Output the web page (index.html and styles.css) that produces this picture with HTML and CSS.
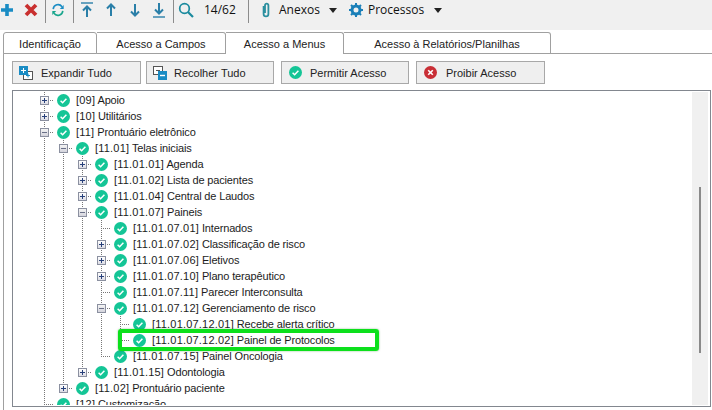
FILE: index.html
```html
<!DOCTYPE html>
<html lang="pt-BR">
<head>
<meta charset="utf-8">
<title>Acesso a Menus</title>
<link rel="stylesheet" href="styles.css">
</head>
<body>
<svg class="defs" width="0" height="0" aria-hidden="true">
  <symbol id="ok" viewBox="0 0 13 13">
    <circle cx="6.5" cy="6.5" r="6.5" fill="#14c596"/>
    <path d="M3.6 6.8 5.6 8.7 9.4 4.7" fill="none" stroke="#fff" stroke-width="1.5"/>
  </symbol>
</svg>

<header class="toolbar">
  <span class="tool first"><svg width="14" height="14" viewBox="0 0 14 14"><path d="M7 1v12M1 7h12" stroke="#1a8cc4" stroke-width="3.6"/></svg></span>
  <span class="tool"><svg width="14" height="14" viewBox="0 0 14 14"><path d="M2 2l10 10M12 2 2 12" stroke="#c9302f" stroke-width="3.8"/></svg></span>
  <span class="sep s2"></span>
  <span class="tool"><svg width="14" height="14" viewBox="0 0 16 16"><path d="M2.5 7A5.6 5.6 0 0 1 12.6 4.2" fill="none" stroke="#1a8cc4" stroke-width="1.8"/><path d="M14.5 2.2v4.6H10z" fill="#1a8cc4"/><path d="M13.5 9A5.6 5.6 0 0 1 3.4 11.8" fill="none" stroke="#17a58c" stroke-width="1.8"/><path d="M1.5 13.8V9.2H6z" fill="#17a58c"/></svg></span>
  <span class="sep s3"></span>
  <span class="tool m1"><svg width="14" height="16" viewBox="0 0 14 16"><path d="M1 1h12" stroke="#2a7fa8" stroke-width="1.4"/><path d="M7 15V5M3 8.5 7 4.5l4 4" fill="none" stroke="#2a7fa8" stroke-width="2"/></svg></span>
  <span class="tool"><svg width="14" height="16" viewBox="0 0 14 16"><path d="M7 14V3M3 6.5 7 2.5l4 4" fill="none" stroke="#2a7fa8" stroke-width="2"/></svg></span>
  <span class="tool"><svg width="14" height="16" viewBox="0 0 14 16"><path d="M7 2v11M3 9.5l4 4 4-4" fill="none" stroke="#2a7fa8" stroke-width="2"/></svg></span>
  <span class="tool"><svg width="14" height="16" viewBox="0 0 14 16"><path d="M1 15h12" stroke="#2a7fa8" stroke-width="1.4"/><path d="M7 1v10M3 7.5l4 4 4-4" fill="none" stroke="#2a7fa8" stroke-width="2"/></svg></span>
  <span class="sep s2"></span>
  <span class="tool"><svg width="16" height="16" viewBox="0 0 16 16"><circle cx="6.5" cy="6.5" r="4.8" fill="none" stroke="#1b8a9e" stroke-width="1.7"/><path d="M10 10l5 5" stroke="#1b8a9e" stroke-width="2.2"/></svg></span>
  <span class="count">14/62</span>
  <span class="sep s12"></span>
  <span class="menu anexos">
    <svg width="10" height="16" viewBox="0 0 10 16"><path d="M2.6 4v8a2.4 2.4 0 0 0 4.8 0V3.4a1.7 1.7 0 0 0-3.4 0V11" fill="none" stroke="#2b8f9f" stroke-width="1.8"/></svg>
    <span class="menu-label">Anexos</span><span class="caret"></span>
  </span>
  <span class="menu procs">
    <svg width="14" height="14" viewBox="0 0 14 14"><circle cx="7" cy="7" r="4" fill="none" stroke="#1a7fb8" stroke-width="3"/><path d="M7 0v3M7 11v3M0 7h3M11 7h3M2 2l2 2M10 10l2 2M12 2l-2 2M4 10l-2 2" stroke="#1a7fb8" stroke-width="2"/></svg>
    <span class="menu-label">Processos</span><span class="caret wide"></span>
  </span>
</header>

<nav class="tabs">
  <span class="tab t1">Identificação</span>
  <span class="tab t2">Acesso a Campos</span>
  <span class="tab t3 active">Acesso a Menus</span>
  <span class="tab t4">Acesso à Relatórios/Planilhas</span>
</nav>

<main class="pane">
  <div class="actions">
    <button class="btn b1">
      <svg width="14" height="14" viewBox="0 0 14 14"><rect x="4.5" y="5.5" width="9" height="8" fill="#fff" stroke="#555"/><path d="M7 9.5h4M9 7.5v4" stroke="#1a8cc4"/><rect x="0" y="0" width="9" height="9" fill="#1a8cc4"/><path d="M2 4.5h5M4.5 2v5" stroke="#fff"/></svg>
      <span>Expandir Tudo</span>
    </button>
    <button class="btn b2">
      <svg width="14" height="14" viewBox="0 0 14 14"><rect x=".5" y=".5" width="9" height="8" fill="#fff" stroke="#555"/><path d="M3 4.5h4" stroke="#555"/><rect x="5" y="5" width="9" height="9" fill="#1a8cc4"/><path d="M7 9.5h5" stroke="#fff" stroke-width="1.4"/></svg>
      <span>Recolher Tudo</span>
    </button>
    <button class="btn b3">
      <svg class="i13" width="13" height="13"><use href="#ok"/></svg>
      <span>Permitir Acesso</span>
    </button>
    <button class="btn b4">
      <svg width="13" height="13" viewBox="0 0 13 13"><circle cx="6.5" cy="6.5" r="6.5" fill="#c92f36"/><path d="M4.2 4.2l4.6 4.6M8.8 4.2 4.2 8.8" stroke="#fff" stroke-width="1.6"/></svg>
      <span>Proibir Acesso</span>
    </button>
  </div>

  <section class="tree">
    <div class="list">
      <div class="row"><i class="c tee"><b class="exp plus"></b></i><i class="ic"><svg width="13" height="13"><use href="#ok"/></svg></i><span><em>[09]</em> Apoio</span></div>
      <div class="row"><i class="c tee"><b class="exp plus"></b></i><i class="ic"><svg width="13" height="13"><use href="#ok"/></svg></i><span><em>[10]</em> Utilitários</span></div>
      <div class="row"><i class="c tee"><b class="exp minus"></b></i><i class="ic"><svg width="13" height="13"><use href="#ok"/></svg></i><span><em>[11]</em> Prontuário eletrônico</span></div>
      <div class="row"><i class="c v"></i><i class="c tee"><b class="exp minus"></b></i><i class="ic"><svg width="13" height="13"><use href="#ok"/></svg></i><span><em>[11.01]</em> Telas iniciais</span></div>
      <div class="row"><i class="c v"></i><i class="c v"></i><i class="c tee"><b class="exp plus"></b></i><i class="ic"><svg width="13" height="13"><use href="#ok"/></svg></i><span><em>[11.01.01]</em> Agenda</span></div>
      <div class="row"><i class="c v"></i><i class="c v"></i><i class="c tee"><b class="exp plus"></b></i><i class="ic"><svg width="13" height="13"><use href="#ok"/></svg></i><span><em>[11.01.02]</em> Lista de pacientes</span></div>
      <div class="row"><i class="c v"></i><i class="c v"></i><i class="c tee"><b class="exp plus"></b></i><i class="ic"><svg width="13" height="13"><use href="#ok"/></svg></i><span><em>[11.01.04]</em> Central de Laudos</span></div>
      <div class="row"><i class="c v"></i><i class="c v"></i><i class="c tee"><b class="exp minus"></b></i><i class="ic"><svg width="13" height="13"><use href="#ok"/></svg></i><span><em>[11.01.07]</em> Paineis</span></div>
      <div class="row"><i class="c v"></i><i class="c v"></i><i class="c v"></i><i class="c tee"></i><i class="ic"><svg width="13" height="13"><use href="#ok"/></svg></i><span><em>[11.01.07.01]</em> Internados</span></div>
      <div class="row"><i class="c v"></i><i class="c v"></i><i class="c v"></i><i class="c tee"><b class="exp plus"></b></i><i class="ic"><svg width="13" height="13"><use href="#ok"/></svg></i><span><em>[11.01.07.02]</em> Classificação de risco</span></div>
      <div class="row"><i class="c v"></i><i class="c v"></i><i class="c v"></i><i class="c tee"><b class="exp plus"></b></i><i class="ic"><svg width="13" height="13"><use href="#ok"/></svg></i><span><em>[11.01.07.06]</em> Eletivos</span></div>
      <div class="row"><i class="c v"></i><i class="c v"></i><i class="c v"></i><i class="c tee"><b class="exp plus"></b></i><i class="ic"><svg width="13" height="13"><use href="#ok"/></svg></i><span><em>[11.01.07.10]</em> Plano terapêutico</span></div>
      <div class="row"><i class="c v"></i><i class="c v"></i><i class="c v"></i><i class="c tee"></i><i class="ic"><svg width="13" height="13"><use href="#ok"/></svg></i><span><em>[11.01.07.11]</em> Parecer Interconsulta</span></div>
      <div class="row"><i class="c v"></i><i class="c v"></i><i class="c v"></i><i class="c tee"><b class="exp minus"></b></i><i class="ic"><svg width="13" height="13"><use href="#ok"/></svg></i><span><em>[11.01.07.12]</em> Gerenciamento de risco</span></div>
      <div class="row"><i class="c v"></i><i class="c v"></i><i class="c v"></i><i class="c v"></i><i class="c tee"></i><i class="ic"><svg width="13" height="13"><use href="#ok"/></svg></i><span><em>[11.01.07.12.01]</em> Recebe alerta crítico</span></div>
      <div class="row"><i class="c v"></i><i class="c v"></i><i class="c v"></i><i class="c v"></i><i class="c end"></i><i class="ic"><svg width="13" height="13"><use href="#ok"/></svg></i><span><em>[11.01.07.12.02]</em> Painel de Protocolos</span></div>
      <div class="row"><i class="c v"></i><i class="c v"></i><i class="c v"></i><i class="c end"></i><i class="ic"><svg width="13" height="13"><use href="#ok"/></svg></i><span><em>[11.01.07.15]</em> Painel Oncologia</span></div>
      <div class="row"><i class="c v"></i><i class="c v"></i><i class="c end"><b class="exp plus"></b></i><i class="ic"><svg width="13" height="13"><use href="#ok"/></svg></i><span><em>[11.01.15]</em> Odontologia</span></div>
      <div class="row"><i class="c v"></i><i class="c end"><b class="exp plus"></b></i><i class="ic"><svg width="13" height="13"><use href="#ok"/></svg></i><span><em>[11.02]</em> Prontuário paciente</span></div>
      <div class="row"><i class="c tee"></i><i class="ic"><svg width="13" height="13"><use href="#ok"/></svg></i><span><em>[12]</em> Customização</span></div>
    </div>
    <div class="scrollbar"><div class="thumb"></div></div>
    <div class="highlight"></div>
  </section>
</main>
</body>
</html>
```

FILE: styles.css
```css
* { box-sizing: border-box; }
html, body { margin: 0; height: 410px; overflow: hidden; background: #fff; }
body { font: 11px/16px "Liberation Sans", sans-serif; color: #1c1c1c; }
.defs { display: block; height: 0; }

.toolbar { display: flex; height: 30px; background: #f0f0f0; align-items: flex-start; font-family: "Open Sans", sans-serif; }
.tool { display: flex; width: 24px; height: 20px; align-items: center; justify-content: center; }
.first { margin-left: -5px; }
.m1 { margin-left: 1px; }
.sep { width: 1px; height: 23px; background: #8c8c8c; }
.s2 { margin-left: 2px; }
.s3 { margin-left: 3px; }
.s12 { margin-left: 12px; }
.count { margin-left: 6px; width: 32px; height: 20px; font-size: 12px; line-height: 20px; color: #111; }
.menu { display: flex; height: 20px; align-items: center; }
.menu-label { font-size: 12px; line-height: 20px; color: #111; }
.anexos { margin-left: 12px; }
.anexos .menu-label { margin-left: 8px; }
.procs { margin-left: 12px; }
.procs .menu-label { margin-left: 5px; }
.caret { width: 0; height: 0; margin-left: 9px; border: 4px solid transparent; border-top: 5px solid #222; border-bottom: 0; }
.caret.wide { margin-left: 10px; }

.tabs { position: relative; display: flex; height: 22px; margin-top: 2px; margin-bottom: -1px; padding-left: 3px; }
.tab { height: 22px; padding-top: 3px; border: 1px solid #a0a0a0; border-left: 0; border-radius: 0 3px 0 0; text-align: center; color: #222; background: #fff; }
.t1 { width: 94px; border-left: 1px solid #a0a0a0; border-radius: 3px 3px 0 0; }
.t2 { width: 129px; }
.t3 { width: 118px; border-bottom: 0; }
.t4 { width: 207px; }

.pane { height: 357px; padding: 7px 0 0 8px; margin-left: 3px; border-left: 1px solid #a0a0a0; border-top: 1px solid #a0a0a0; }
.actions { display: flex; height: 23px; }
.btn { display: flex; height: 23px; padding: 0 0 0 6px; align-items: center; border: 1px solid #a8a8a8; background: #efefef; font: inherit; color: #222; }
.b1 { width: 129px; }
.b1 span { margin-left: 8px; }
.b2 { width: 128px; margin-left: 5px; }
.b2 span { margin-left: 7px; }
.b3 { width: 128px; margin-left: 7px; padding-left: 7px; }
.b3 span { margin-left: 8px; }
.b4 { width: 129px; margin-left: 7px; padding-left: 7px; }
.b4 span { margin-left: 9px; }

.tree { position: relative; display: flex; width: 699px; height: 317px; margin-top: 6px; padding: 1px; border: 1px solid #82878f; overflow: hidden; }
.list { flex: 1; padding-left: 21px; overflow: hidden; }
.row { display: flex; height: 16px; white-space: nowrap; }
.row span { padding-left: 3px; letter-spacing: -.15px; }
.row em { font-style: normal; letter-spacing: .2px; }
.c, .ic { display: flex; flex: none; width: 19px; height: 16px; align-items: center; justify-content: center; }
.c { padding-right: 1px; }
.v { background: repeating-linear-gradient(#777 0 1px, transparent 1px 2px) 9px 0 / 1px 100% no-repeat; }
.tee { background:
  repeating-linear-gradient(#777 0 1px, transparent 1px 2px) 9px 0 / 1px 100% no-repeat,
  repeating-linear-gradient(90deg, #777 0 1px, transparent 1px 2px) 9px 8px / 10px 1px no-repeat; }
.end { background:
  repeating-linear-gradient(#777 0 1px, transparent 1px 2px) 9px 0 / 1px 9px no-repeat,
  repeating-linear-gradient(90deg, #777 0 1px, transparent 1px 2px) 9px 8px / 10px 1px no-repeat; }
.exp { display: block; width: 9px; height: 9px; border: 1px solid #8b90a0; background-color: #f2f2f2; }
.plus { background: linear-gradient(#27407a, #27407a) center / 5px 1px no-repeat, linear-gradient(#27407a, #27407a) center / 1px 5px no-repeat, linear-gradient(#fff, #dcdce4); }
.minus { background: linear-gradient(#6a7088, #6a7088) center / 5px 1px no-repeat, linear-gradient(#f4f4f4, #d4d4dc); }

.scrollbar { flex: none; width: 16px; margin-right: 1px; padding: 95px 0 0 7px; background: #f0f0f0; }
.thumb { width: 2px; height: 166px; background: #8a8a8a; }
.highlight { position: absolute; left: 105px; top: 238px; width: 261px; height: 22px; border: 4px solid #0ce01c; border-radius: 3px; box-shadow: 0 0 2px rgba(0, 120, 0, .5); }
```
